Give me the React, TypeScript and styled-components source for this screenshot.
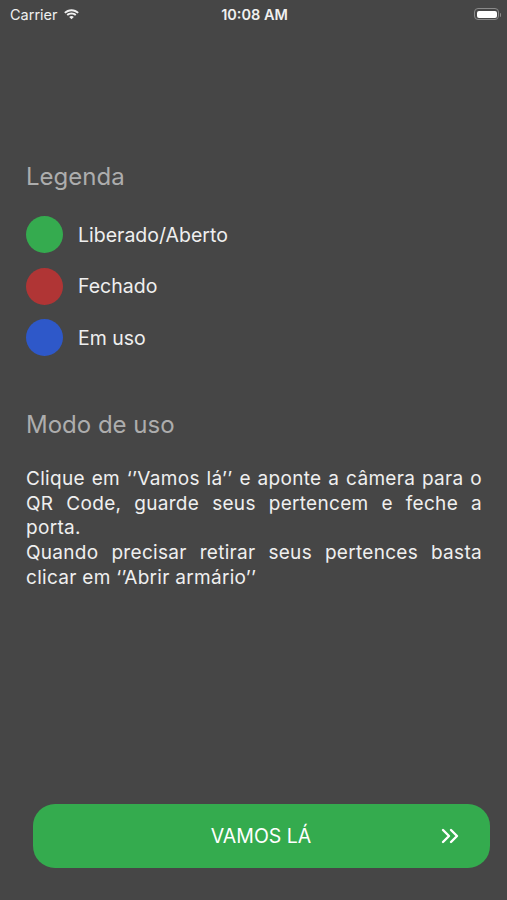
import React from "react";
import styled, { createGlobalStyle } from "styled-components";

const Global = createGlobalStyle`
  html, body { margin: 0; padding: 0; background: #464646; }
  body { font-family: Inter, "Noto Sans", sans-serif; -webkit-font-smoothing: antialiased; }
  * { box-sizing: border-box; }
`;

const Screen = styled.div`
  width: 507px;
  height: 900px;
  background: #464646;
  display: flex;
  flex-direction: column;
  color: #efefef;
`;

const StatusBar = styled.div`
  height: 28px;
  display: grid;
  grid-template-columns: 1fr auto 1fr;
  align-items: center;
  padding: 0 8px 0 10px;
  font-size: 14.5px;
  color: #f0f0f0;
`;

const Carrier = styled.div`
  display: flex;
  align-items: center;
  gap: 5px;
`;

const Time = styled.div`
  font-weight: 600;
`;

const BatteryWrap = styled.div`
  display: flex;
  justify-content: flex-end;
  align-items: center;
`;

const Battery = styled.div`
  width: 25px;
  height: 12px;
  border: 1px solid #8a8a8a;
  border-radius: 4px;
  padding: 1.5px;
  position: relative;
  &::after {
    content: "";
    position: absolute;
    right: -3px;
    top: 3.5px;
    width: 1.5px;
    height: 4px;
    background: #8a8a8a;
    border-radius: 0 1px 1px 0;
  }
`;

const BatteryFill = styled.div`
  width: 100%;
  height: 100%;
  background: #fff;
  border-radius: 2px;
`;

const Content = styled.div`
  flex: 1;
  padding: 134px 25px 0 26px;
  display: flex;
  flex-direction: column;
`;

const Title = styled.h2`
  margin: 0;
  font-size: 24px;
  font-weight: 400;
  color: #adadad;
  line-height: 30px;
`;

const LegendList = styled.div`
  display: flex;
  flex-direction: column;
  gap: 14.5px;
  margin-top: 24px;
`;

const LegendRow = styled.div`
  display: flex;
  align-items: center;
  gap: 15px;
`;

const Dot = styled.span<{ $color: string }>`
  width: 37px;
  height: 37px;
  border-radius: 50%;
  background: ${(p) => p.$color};
  flex-shrink: 0;
`;

const Label = styled.span`
  font-size: 19.5px;
  color: #efefef;
`;

const Section = styled.div`
  margin-top: 54px;
`;

const Paragraph = styled.p`
  margin: 27px 0 0;
  font-size: 19px;
  line-height: 24.7px;
  text-align: justify;
  color: #efefef;
  letter-spacing: 0.3px;
`;

const Footer = styled.div`
  padding: 0 17px 32px 33px;
`;

const Button = styled.button`
  width: 100%;
  height: 64px;
  border: none;
  border-radius: 22px;
  background: #34ab4e;
  color: #fff;
  font-family: Inter, sans-serif;
  font-size: 19.5px;
  position: relative;
  display: flex;
  align-items: center;
  justify-content: center;
  padding: 0;
`;

const ButtonText = styled.span`
  margin-left: -1px;
`;

const IconSpot = styled.span`
  position: absolute;
  right: 31px;
  top: 50%;
  transform: translateY(-50%);
  display: flex;
`;

const legend = [
  { color: "#35ab4f", label: "Liberado/Aberto" },
  { color: "#b03535", label: "Fechado" },
  { color: "#2e58c9", label: "Em uso" },
];

export default function App() {
  return (
    <>
      <Global />
      <Screen>
        <StatusBar>
          <Carrier>
            Carrier
            <svg width="17" height="12" viewBox="0 0 17 12">
              <path d="M8.5 3.2c2.3 0 4.4.9 6 2.4l1.3-1.4C13.9 2.4 11.3 1.3 8.5 1.3S3.1 2.4 1.2 4.2l1.3 1.4c1.6-1.5 3.7-2.4 6-2.4z" fill="#f0f0f0" />
              <path d="M8.5 6.4c1.4 0 2.6.5 3.6 1.4l1.3-1.4C12.1 5.2 10.4 4.5 8.5 4.5S4.9 5.2 3.6 6.4l1.3 1.4c1-.9 2.2-1.4 3.6-1.4z" fill="#f0f0f0" />
              <path d="M8.5 11.3l2.3-2.4c-.6-.6-1.4-.9-2.3-.9s-1.7.3-2.3.9z" fill="#f0f0f0" />
            </svg>
          </Carrier>
          <Time>10:08 AM</Time>
          <BatteryWrap>
            <Battery>
              <BatteryFill />
            </Battery>
          </BatteryWrap>
        </StatusBar>
        <Content>
          <Title>Legenda</Title>
          <LegendList>
            {legend.map((l) => (
              <LegendRow key={l.label}>
                <Dot $color={l.color} />
                <Label>{l.label}</Label>
              </LegendRow>
            ))}
          </LegendList>
          <Section>
            <Title>Modo de uso</Title>
            <Paragraph>
              Clique em ‘’Vamos lá’’ e aponte a câmera para o QR Code, guarde seus pertencem e feche a porta.
              <br />
              Quando precisar retirar seus pertences basta clicar em ‘’Abrir armário’’
            </Paragraph>
          </Section>
        </Content>
        <Footer>
          <Button>
            <ButtonText>VAMOS LÁ</ButtonText>
            <IconSpot>
              <svg width="18" height="16" viewBox="0 0 18 16" fill="none" stroke="#fff" strokeWidth="2.4" strokeLinecap="round" strokeLinejoin="round">
                <path d="M2 2l6 6-6 6" />
                <path d="M10 2l6 6-6 6" />
              </svg>
            </IconSpot>
          </Button>
        </Footer>
      </Screen>
    </>
  );
}
